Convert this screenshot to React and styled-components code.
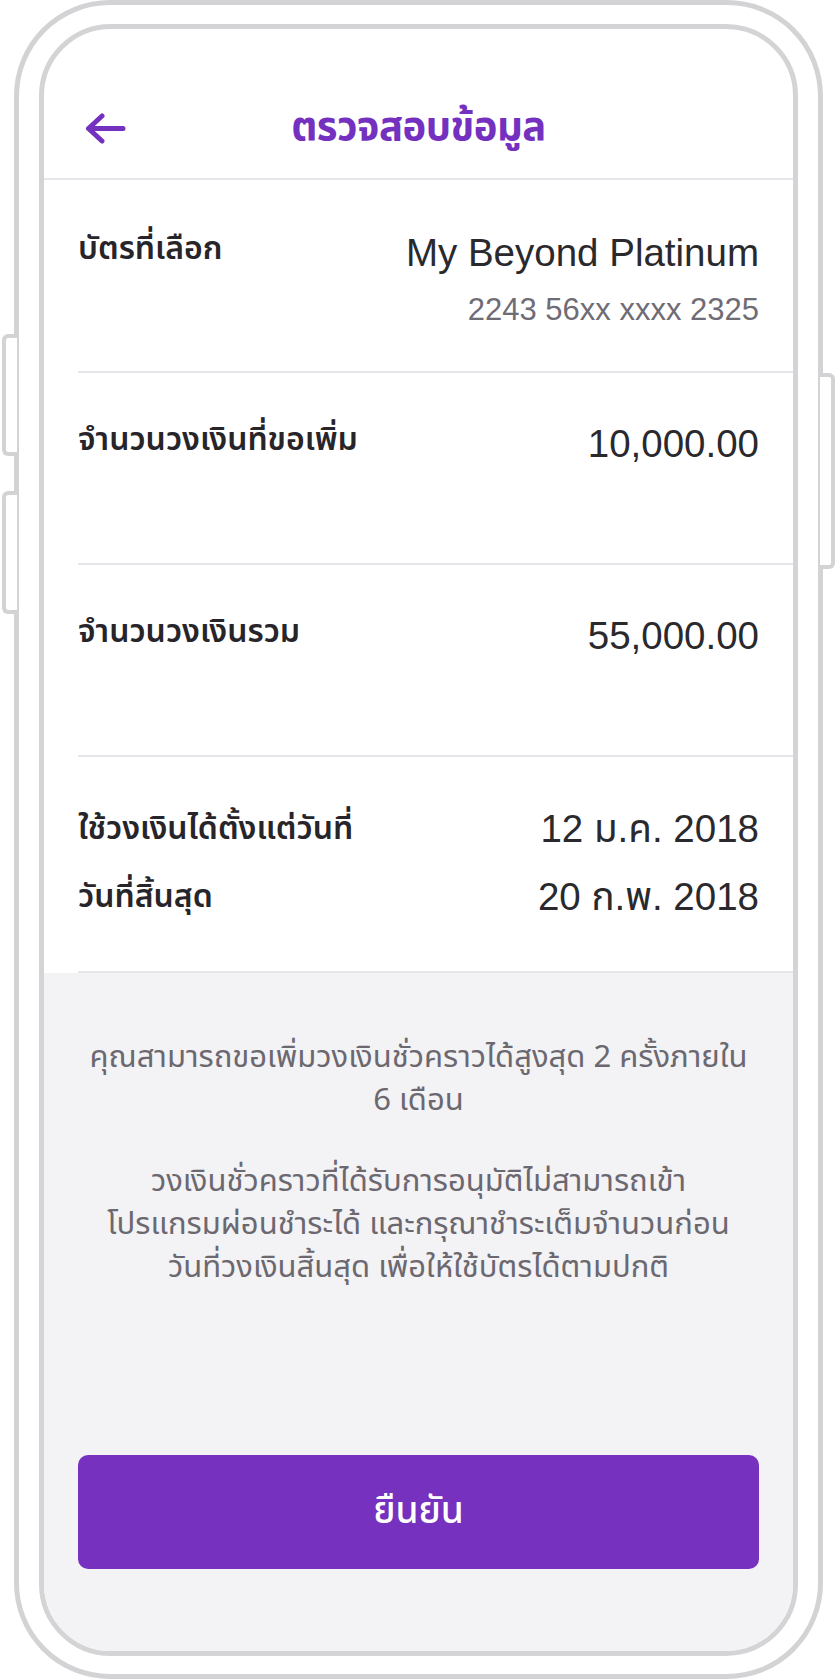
import styled, { createGlobalStyle } from 'styled-components';

const thai = `"Noto Sans Thai", "Noto Sans", "DejaVu Sans", sans-serif`;
const latin = `"Liberation Sans", "Noto Sans Thai", "Noto Sans", sans-serif`;

const GlobalStyle = createGlobalStyle`
  html, body {
    margin: 0;
    padding: 0;
    background: #ffffff;
  }
  * {
    box-sizing: border-box;
  }
`;

const rows = [
  { label: 'จำนวนวงเงินที่ขอเพิ่ม', value: '10,000.00' },
  { label: 'จำนวนวงเงินรวม', value: '55,000.00' },
];

const BackArrow = () => (
  <svg width="41" height="31" viewBox="0 0 41 31" fill="none">
    <path
      d="M38 15.5H3.5M17 3L3.5 15.5L17 28"
      stroke="#7431bf"
      strokeWidth="5"
      strokeLinecap="round"
      strokeLinejoin="round"
    />
  </svg>
);

const App = () => {
  return (
    <Page>
      <GlobalStyle />
      <Device>
        <SideKey $side="left" $top={329} $height={122} />
        <SideKey $side="left" $top={486} $height={123} />
        <SideKey $side="right" $top={368} $height={196} />
        <Screen>
          <Header>
            <BackButton>
              <BackArrow />
            </BackButton>
            <Title>ตรวจสอบข้อมูล</Title>
            <span />
          </Header>

          <Row $pt={50} $pb={41}>
            <Label>บัตรที่เลือก</Label>
            <ValueStack>
              <Value>My Beyond Platinum</Value>
              <SubValue>2243 56xx xxxx 2325</SubValue>
            </ValueStack>
          </Row>

          {rows.map((r) => (
            <Row key={r.label} $pt={48} $pb={96}>
              <Label>{r.label}</Label>
              <Value>{r.value}</Value>
            </Row>
          ))}

          <DateRow>
            <DateLine>
              <Label $lh={68}>ใช้วงเงินได้ตั้งแต่วันที่</Label>
              <Value $lh={68}>12 ม.ค. 2018</Value>
            </DateLine>
            <DateLine>
              <Label $lh={68}>วันที่สิ้นสุด</Label>
              <Value $lh={68}>20 ก.พ. 2018</Value>
            </DateLine>
          </DateRow>

          <Notes>
            <Note>
              คุณสามารถขอเพิ่มวงเงินชั่วคราวได้สูงสุด 2 ครั้งภายใน
              <br />6 เดือน
            </Note>
            <Note>
              วงเงินชั่วคราวที่ได้รับการอนุมัติไม่สามารถเข้า
              <br />
              โปรแกรมผ่อนชำระได้ และกรุณาชำระเต็มจำนวนก่อน
              <br />
              วันที่วงเงินสิ้นสุด เพื่อให้ใช้บัตรได้ตามปกติ
            </Note>
            <ConfirmButton>ยืนยัน</ConfirmButton>
          </Notes>
        </Screen>
      </Device>
    </Page>
  );
};

const Page = styled.div`
  width: 837px;
  height: 1680px;
  background: #ffffff;
  overflow: hidden;
`;

const Device = styled.div`
  position: relative;
  margin-left: 14px;
  width: 809px;
  height: 1679px;
  border: 5px solid #d3d3d5;
  border-radius: 96px;
  padding: 19px 20px 18px 20px;
  background: #ffffff;
`;

const SideKey = styled.div`
  position: absolute;
  top: ${(p) => p.$top}px;
  height: ${(p) => p.$height}px;
  width: 15px;
  background: #ffffff;
  border: 4px solid #d3d3d5;
  ${(p) =>
    p.$side === 'left'
      ? `left: -17px; border-right: none; border-radius: 6px 0 0 6px;`
      : `right: -17px; border-left: none; border-radius: 0 6px 6px 0;`}
`;

const Screen = styled.div`
  display: flex;
  flex-direction: column;
  height: 100%;
  border: 5px solid #d4d4d6;
  border-radius: 72px;
  overflow: hidden;
  background: #ffffff;
`;

const Header = styled.header`
  display: grid;
  grid-template-columns: 1fr auto 1fr;
  align-items: center;
  height: 151px;
  padding-top: 49px;
  border-bottom: 2px solid #e7e6eb;
`;

const BackButton = styled.button`
  display: flex;
  align-items: center;
  width: 41px;
  height: 31px;
  margin-left: 41px;
  padding: 0;
  border: none;
  background: none;
`;

const Title = styled.h1`
  margin: 0;
  font-family: ${thai};
  font-size: 40px;
  font-weight: 700;
  color: #7431bf;
  line-height: 50px;
  letter-spacing: -0.5px;
`;

const Row = styled.div`
  display: flex;
  justify-content: space-between;
  align-items: flex-start;
  margin-left: 34px;
  padding: ${(p) => p.$pt}px 34px ${(p) => p.$pb}px 0;
  border-bottom: 2px solid #e6e5ea;
`;

const Label = styled.div`
  font-family: ${thai};
  font-size: 32px;
  font-weight: 600;
  color: #27252a;
  line-height: ${(p) => p.$lh || 38}px;
  white-space: nowrap;
`;

const ValueStack = styled.div`
  display: flex;
  flex-direction: column;
  align-items: flex-end;
`;

const Value = styled.div`
  font-family: ${latin};
  font-size: 38.5px;
  color: #2a292d;
  line-height: ${(p) => p.$lh || 46}px;
  white-space: nowrap;
`;

const SubValue = styled.div`
  margin-top: 14px;
  font-family: ${latin};
  font-size: 31px;
  color: #6f6c75;
  line-height: 40px;
`;

const DateRow = styled.div`
  margin-left: 34px;
  padding: 38px 34px 40px 0;
  border-bottom: 2px solid #e6e5ea;
`;

const DateLine = styled.div`
  display: flex;
  justify-content: space-between;
`;

const Notes = styled.div`
  flex: 1;
  display: flex;
  flex-direction: column;
  align-items: center;
  padding: 63px 34px 82px;
  background: #f3f2f5;
`;

const Note = styled.p`
  margin: 0 0 38px;
  font-family: ${thai};
  font-size: 31px;
  line-height: 43px;
  color: #6b6870;
  text-align: center;
  white-space: nowrap;
`;

const ConfirmButton = styled.button`
  margin-top: auto;
  width: 100%;
  height: 114px;
  border: none;
  border-radius: 10px;
  background: #7631be;
  font-family: ${thai};
  font-size: 37px;
  font-weight: 500;
  color: #ffffff;
`;

export default App;
